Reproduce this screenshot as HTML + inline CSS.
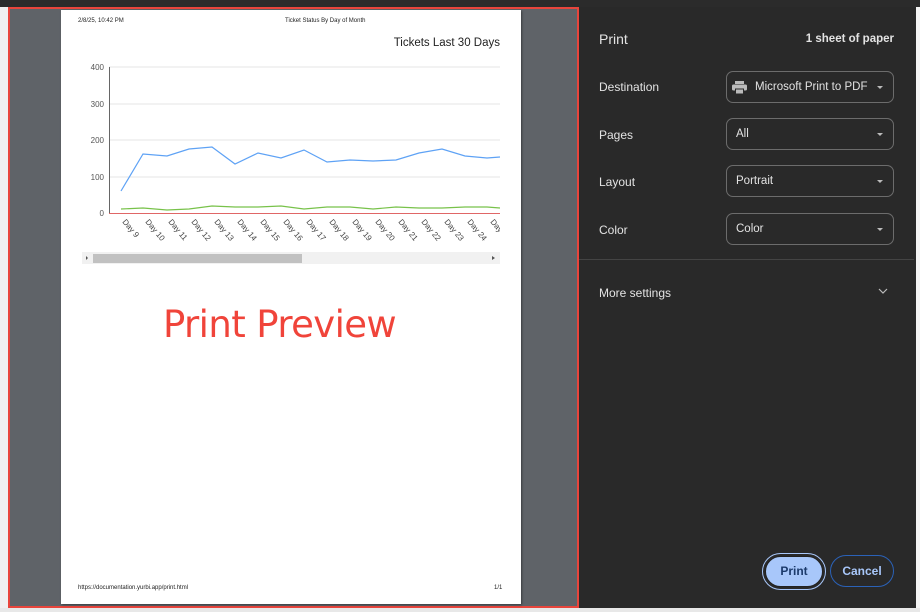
<!DOCTYPE html>
<html><head><meta charset="utf-8"><style>
*{margin:0;padding:0;box-sizing:border-box}
body{width:920px;height:612px;overflow:hidden;background:#e8e8e8;font-family:"Liberation Sans",sans-serif;position:relative}
.top{position:absolute;left:0;top:0;width:920px;height:7px;background:#2b2b2b}
.leftstrip{position:absolute;left:0;top:7px;width:9px;height:601px;background:#f0f0f0}
.preview{position:absolute;left:8px;top:7px;width:571px;height:601px;background:#5f6368;border:2px solid #e8453c}
.page{position:absolute;left:61px;top:10px;width:460px;height:594px;background:#fff;box-shadow:1px 1px 2px rgba(0,0,0,.4)}
.panel{position:absolute;left:579px;top:7px;width:337px;height:601px;background:#292929;color:#e3e3e3;font-size:12px}
.rstrip{position:absolute;left:916px;top:7px;width:4px;height:601px;background:#f4f4f4}
.lbl{position:absolute;left:20px;font-size:12px;color:#e3e3e3}
.sel{position:absolute;left:147px;width:168px;height:32px;border:1px solid #6c6c6c;border-radius:7px;font-size:11.5px;color:#e3e3e3;padding-left:9px;line-height:31px}
.sel:after{content:"";position:absolute;right:10px;top:14px;border-left:3px solid transparent;border-right:3px solid transparent;border-top:3px solid #bbb}
.small{position:absolute;font-size:6px;color:#222}
</style></head><body>
<div class="top"></div>
<div class="leftstrip"></div>
<div class="preview"></div>
<div class="page">
 <div class="small" style="left:17px;top:8px">2/8/25, 10:42 PM</div>
 <div class="small" style="left:224px;top:8px">Ticket Status By Day of Month</div>
 <div style="position:absolute;right:21px;top:27px;font-size:11.5px;color:#222">Tickets Last 30 Days</div>
 <div class="small" style="left:17px;top:575px">https://documentation.yurbi.app/print.html</div>
 <div class="small" style="left:433px;top:575px">1/1</div>
 <div style="position:absolute;left:102px;top:293px;font-size:37px;color:#f0443a;font-family:'DejaVu Sans',sans-serif;letter-spacing:-0.6px">Print Preview</div>
</div>
<svg style="position:absolute;left:0;top:0" width="580" height="270">
 <g stroke="#e6e6e6" stroke-width="1">
  <line x1="109" y1="67" x2="500" y2="67"/><line x1="109" y1="104" x2="500" y2="104"/>
  <line x1="109" y1="140" x2="500" y2="140"/><line x1="109" y1="177" x2="500" y2="177"/>
 </g>
 <line x1="109.5" y1="67" x2="109.5" y2="214" stroke="#666"/>
 <line x1="109" y1="213.5" x2="500" y2="213.5" stroke="#e06666"/>
 <g font-size="8" fill="#555" text-anchor="end" font-family="Liberation Sans">
  <text x="104" y="70">400</text><text x="104" y="107">300</text><text x="104" y="143">200</text><text x="104" y="180">100</text><text x="104" y="216">0</text>
 </g>
 <polyline fill="none" stroke="#5ea2f5" stroke-width="1.2" points="121,191 143,154 167,156 189,149 212,147 235,164 258,153 281,158 304,150 327,162 350,160 373,161 396,160 419,153 442,149 465,156 487,158 500,157"/>
 <polyline fill="none" stroke="#78c24a" stroke-width="1.2" points="121,209 143,208 167,210 189,209 212,206 235,207 258,207 281,206 304,209 327,207 350,207 373,209 396,207 419,208 442,208 465,207 487,207 500,208"/>
 <g font-size="8" fill="#444" font-family="Liberation Sans">
  <text transform="translate(122,222) rotate(50)">Day 9</text>
  <text transform="translate(145,222) rotate(50)">Day 10</text>
  <text transform="translate(168,222) rotate(50)">Day 11</text>
  <text transform="translate(191,222) rotate(50)">Day 12</text>
  <text transform="translate(214,222) rotate(50)">Day 13</text>
  <text transform="translate(237,222) rotate(50)">Day 14</text>
  <text transform="translate(260,222) rotate(50)">Day 15</text>
  <text transform="translate(283,222) rotate(50)">Day 16</text>
  <text transform="translate(306,222) rotate(50)">Day 17</text>
  <text transform="translate(329,222) rotate(50)">Day 18</text>
  <text transform="translate(352,222) rotate(50)">Day 19</text>
  <text transform="translate(375,222) rotate(50)">Day 20</text>
  <text transform="translate(398,222) rotate(50)">Day 21</text>
  <text transform="translate(421,222) rotate(50)">Day 22</text>
  <text transform="translate(444,222) rotate(50)">Day 23</text>
  <text transform="translate(467,222) rotate(50)">Day 24</text>
  <text transform="translate(490,222) rotate(50)">Day 25</text>
 </g>
 <rect x="82" y="252" width="418" height="12" fill="#f1f1f1"/>
 <rect x="93" y="254" width="209" height="9" fill="#c1c1c1"/>
 <path d="M88 258 l-2 -2 v4z M492 256 l3 2 l-3 2z" fill="#555"/>
</svg>
<div style="position:absolute;left:500px;top:10px;width:21px;height:260px;background:#fff"></div>
<div class="panel">
 <div class="lbl" style="top:24px;font-size:14px">Print</div>
 <div style="position:absolute;right:22px;top:26px;font-size:11.5px;font-weight:bold">1 sheet of paper</div>
 <div class="lbl" style="top:73px">Destination</div>
 <div class="sel" style="top:64px;padding-left:28px">Microsoft Print to PDF
  <svg style="position:absolute;left:5px;top:9px" width="15" height="13" viewBox="0 0 15 13"><rect x="3" y="0" width="9" height="3" fill="#bbb"/><rect x="0" y="3.5" width="15" height="6" rx="1.5" fill="#bbb"/><rect x="3.5" y="8" width="8" height="5" fill="#bbb" stroke="#292929"/></svg></div>
 <div class="lbl" style="top:121px">Pages</div>
 <div class="sel" style="top:111px">All</div>
 <div class="lbl" style="top:168px">Layout</div>
 <div class="sel" style="top:158px">Portrait</div>
 <div class="lbl" style="top:216px">Color</div>
 <div class="sel" style="top:206px">Color</div>
 <div style="position:absolute;left:0;top:252px;width:335px;height:1px;background:#444"></div>
 <div class="lbl" style="top:279px">More settings</div>
 <svg style="position:absolute;left:299px;top:281px" width="10" height="6"><path d="M1 1 L5 5 L9 1" stroke="#bbb" fill="none" stroke-width="1.2"/></svg>
 <div style="position:absolute;left:183px;top:546px;width:64px;height:37px;border:1.5px solid #a8c7fa;border-radius:19px;padding:2px"><div style="width:100%;height:100%;background:#a8c7fa;border-radius:16px;border:1px solid #222;color:#1b3a6b;font-weight:bold;font-size:12px;text-align:center;line-height:29px">Print</div></div>
 <div style="position:absolute;left:251px;top:548px;width:64px;height:32px;border:1px solid #2b62b8;border-radius:16px;color:#a8c7fa;font-weight:bold;font-size:12px;text-align:center;line-height:30px">Cancel</div>
</div>
<div class="rstrip"></div>
</body></html>
